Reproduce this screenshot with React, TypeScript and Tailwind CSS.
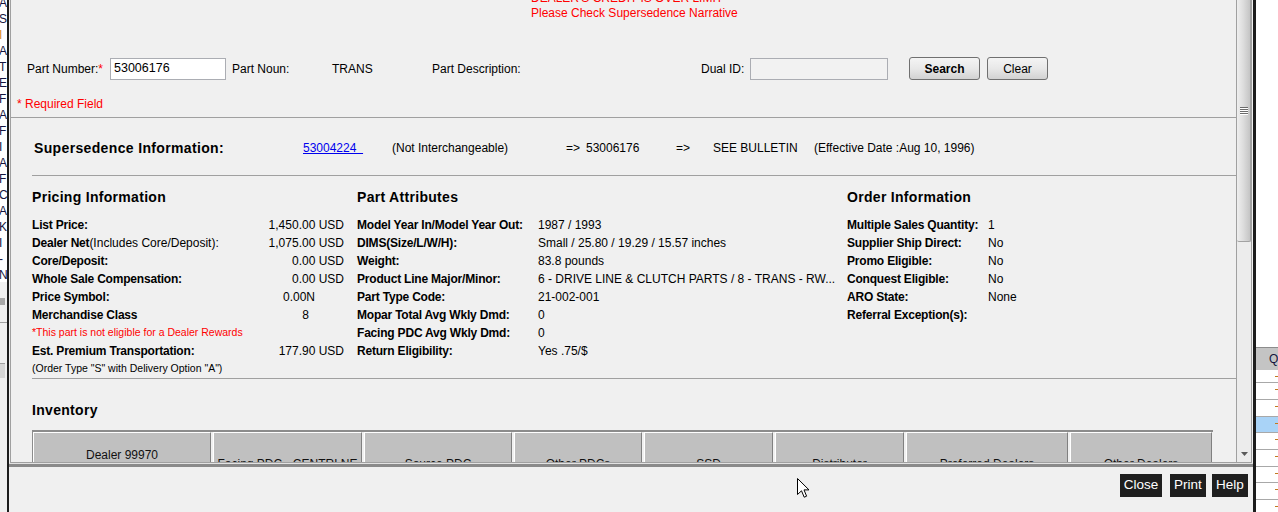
import React from "react";

const leftRows = ["AI", "S", "I", "A", "T", "E", "F", "A", "F", "I", "A", "F", "C", "A", "K", "I", "-", "N"];

const pricing = [
  { label: "List Price:", value: "1,450.00 USD", pr: "pr-0" },
  { label: "Dealer Net", extra: "(Includes Core/Deposit):", value: "1,075.00 USD", pr: "pr-0" },
  { label: "Core/Deposit:", value: "0.00 USD", pr: "pr-0" },
  { label: "Whole Sale Compensation:", value: "0.00 USD", pr: "pr-0" },
  { label: "Price Symbol:", value: "0.00N", pr: "pr-[29px]" },
  { label: "Merchandise Class", value: "8", pr: "pr-[35px]" },
];

const attributes = [
  ["Model Year In/Model Year Out:", "1987 / 1993"],
  ["DIMS(Size/L/W/H):", "Small / 25.80 / 19.29 / 15.57 inches"],
  ["Weight:", "83.8 pounds"],
  ["Product Line Major/Minor:", "6 - DRIVE LINE & CLUTCH PARTS / 8 - TRANS - RW..."],
  ["Part Type Code:", "21-002-001"],
  ["Mopar Total Avg Wkly Dmd:", "0"],
  ["Facing PDC Avg Wkly Dmd:", "0"],
  ["Return Eligibility:", "Yes .75/$"],
];

const orderInfo = [
  ["Multiple Sales Quantity:", "1"],
  ["Supplier Ship Direct:", "No"],
  ["Promo Eligible:", "No"],
  ["Conquest Eligible:", "No"],
  ["ARO State:", "None"],
  ["Referral Exception(s):", ""],
];

const inventoryCols = [
  { name: "Dealer 99970", w: "w-[178px]", two: true },
  { name: "Facing PDC - CENTRLNE", w: "w-[149px]" },
  { name: "Source PDC", w: "w-[148px]" },
  { name: "Other PDCs", w: "w-[128px]" },
  { name: "SSD", w: "w-[129px]" },
  { name: "Distributor", w: "w-[129px]" },
  { name: "Preferred Dealers", w: "w-[162px]" },
  { name: "Other Dealers", w: "w-[142px]" },
];

const rightRows = [
  { h: "h-[13px]", blue: false },
  { h: "h-[17px]", blue: false },
  { h: "h-[17px]", blue: false },
  { h: "h-[16px]", blue: true },
  { h: "h-[17px]", blue: false },
  { h: "h-[17px]", blue: false },
  { h: "h-[16px]", blue: false },
  { h: "h-[17px]", blue: false },
  { h: "h-[17px]", blue: false },
];

function LeftStrip() {
  return (
    <div className="flex w-[7px] flex-none flex-col overflow-hidden">
      <div className="h-[282px] flex-none overflow-hidden bg-white">
        <div className="-mt-[5px]">
          {leftRows.map((t, i) => (
            <div
              key={i}
              className={`-ml-px h-[16px] whitespace-nowrap text-[12px] leading-[16px] ${i === 2 ? "text-[#d98a1a]" : "text-[#151540]"}`}
            >
              {t}
            </div>
          ))}
        </div>
      </div>
      <div className="h-[16px] flex-none" />
      <div className="h-[7px] w-[5px] flex-none bg-[#a9a9a9]" />
      <div className="h-[17px] flex-none" />
      <div className="h-px flex-none bg-[#a0a0a0]" />
      <div className="h-[40px] flex-none" />
      <div className="h-[15px] w-[5px] flex-none border-t border-[#a0a0a0] bg-[#d6d6d6]" />
    </div>
  );
}

function RightStrip() {
  return (
    <div className="flex w-[22px] flex-none flex-col overflow-hidden bg-white">
      <div className="h-[347px] flex-none" />
      <div className="h-px flex-none bg-[#8c8c8c]" />
      <div className="flex h-[22px] flex-none items-center bg-[#c4c4c4] pl-[13px] text-[12px] text-[#14143c]">Q</div>
      {rightRows.map((r, i) => (
        <div
          key={i}
          className={`relative flex-none border-b border-[#a8a8a8] ${r.h} ${r.blue ? "bg-[#a9d3f7]" : "bg-white"}`}
        >
          <div className="absolute top-[6px] right-0 h-px w-[3px] bg-[#c07a20]" />
        </div>
      ))}
    </div>
  );
}

function Scrollbar() {
  return (
    <div className="flex w-[15px] flex-none flex-col border-l border-[#a0a0a0] bg-[#ececec]">
      <div className="flex h-[242px] flex-none justify-center rounded-b-[2px] border-r border-b border-[#a2a2a2] bg-linear-to-r from-[#efefef] via-[#dcdcdc] to-[#c4c4c4] pt-[107px]">
        <svg width="8" height="9" viewBox="0 0 8 9">
          <g fill="#6b6b6b">
            <rect x="0" y="0" width="8" height="1" />
            <rect x="0" y="2" width="8" height="1" />
            <rect x="0" y="4" width="8" height="1" />
            <rect x="0" y="6" width="8" height="1" />
          </g>
          <g fill="#ffffff">
            <rect x="0" y="1" width="8" height="1" />
            <rect x="0" y="3" width="8" height="1" />
            <rect x="0" y="5" width="8" height="1" />
            <rect x="0" y="7" width="8" height="1" />
          </g>
        </svg>
      </div>
      <div className="flex-1" />
      <div className="flex h-[17px] flex-none items-center justify-center">
        <svg width="7" height="4" viewBox="0 0 7 4">
          <path d="M0 0 H7 L3.5 4 Z" fill="#5a5a5a" />
        </svg>
      </div>
    </div>
  );
}

function WinButton({ children, w, bold }: { children: React.ReactNode; w: string; bold?: boolean }) {
  return (
    <div
      className={`flex h-[23px] flex-none items-center justify-center rounded-[3px] border border-[#707070] bg-linear-to-b from-[#f4f4f4] via-[#e8e8e8] to-[#d2d2d2] text-[12px] text-black ${w} ${bold ? "font-bold" : ""}`}
    >
      {children}
    </div>
  );
}

function Content() {
  return (
    <div className="flex w-[1225px] flex-none flex-col overflow-hidden">
      <div className="-mt-[9px] pl-[520px] text-[12px] leading-[15px] text-[#ff0000]">
        <div>DEALER'S CREDIT IS OVER LIMIT</div>
        <div>Please Check Supersedence Narrative</div>
      </div>

      <div className="mt-[36px] flex h-[23px] flex-none items-center pl-[16px] text-[12px]">
        <div className="w-[83px] flex-none">
          Part Number:<span className="text-[#ff0000]">*</span>
        </div>
        <div className="flex h-[22px] w-[116px] flex-none items-center border border-[#abadb3] bg-white pl-[3px] text-[12.5px]">
          53006176
        </div>
        <div className="ml-[6px] w-[100px] flex-none">Part Noun:</div>
        <div className="w-[100px] flex-none">TRANS</div>
        <div className="w-[269px] flex-none">Part Description:</div>
        <div className="w-[49px] flex-none">Dual ID:</div>
        <div className="h-[22px] w-[138px] flex-none border border-[#abadb3] bg-[#f2f2f2]" />
        <div className="ml-[21px]">
          <WinButton w="w-[71px]" bold>
            Search
          </WinButton>
        </div>
        <div className="ml-[7px]">
          <WinButton w="w-[61px]">Clear</WinButton>
        </div>
      </div>

      <div className="mt-[16px] h-[16px] flex-none pl-[6px] text-[12px] leading-[16px] text-[#ff0000]">* Required Field</div>

      <div className="mt-[5px] h-px flex-none bg-[#a0a0a0]" />

      <div className="mt-[21px] flex h-[18px] flex-none items-center pl-[23px] text-[12px] whitespace-nowrap">
        <div className="w-[269px] flex-none text-[14px] font-bold tracking-[0.35px]">Supersedence Information:</div>
        <div className="w-[89px] flex-none">
          <span className="text-[#0000ee] underline">53004224&nbsp;&nbsp;</span>
        </div>
        <div className="w-[174px] flex-none">(Not Interchangeable)</div>
        <div className="w-[20px] flex-none">=&gt;</div>
        <div className="w-[90px] flex-none">53006176</div>
        <div className="w-[37px] flex-none">=&gt;</div>
        <div className="w-[101px] flex-none">SEE BULLETIN</div>
        <div>(Effective Date :Aug 10, 1996)</div>
      </div>

      <div className="mt-[18px] ml-[21px] h-px flex-none bg-[#a0a0a0]" />

      <div className="mt-[12px] ml-[21px] flex flex-none items-start text-[12px] whitespace-nowrap">
        <div className="flex w-[312px] flex-none flex-col">
          <div className="h-[18px] text-[14px] leading-[18px] font-bold tracking-[0.3px]">Pricing Information</div>
          <div className="mt-[10px] flex flex-col">
            {pricing.map((p) => (
              <div key={p.label} className="flex h-[18px] items-center justify-between">
                <div className="font-bold tracking-[-0.2px]">
                  {p.label}
                  {p.extra && <span className="font-normal tracking-normal">{p.extra}</span>}
                </div>
                <div className={p.pr}>{p.value}</div>
              </div>
            ))}
            <div className="flex h-[18px] items-center text-[10.5px] text-[#ff0000]">
              *This part is not eligible for a Dealer Rewards
            </div>
            <div className="flex h-[18px] items-center justify-between">
              <div className="font-bold tracking-[-0.2px]">Est. Premium Transportation:</div>
              <div>177.90 USD</div>
            </div>
            <div className="flex h-[18px] items-center text-[10.5px]">(Order Type "S" with Delivery Option "A")</div>
          </div>
        </div>

        <div className="ml-[13px] flex w-[490px] flex-none flex-col">
          <div className="h-[18px] text-[14px] leading-[18px] font-bold tracking-[0.3px]">Part Attributes</div>
          <div className="mt-[10px] flex flex-col">
            {attributes.map(([l, v]) => (
              <div key={l} className="flex h-[18px] items-center">
                <div className="w-[181px] flex-none font-bold tracking-[-0.2px]">{l}</div>
                <div>{v}</div>
              </div>
            ))}
          </div>
        </div>

        <div className="flex flex-1 flex-col">
          <div className="h-[18px] text-[14px] leading-[18px] font-bold tracking-[0.3px]">Order Information</div>
          <div className="mt-[10px] flex flex-col">
            {orderInfo.map(([l, v]) => (
              <div key={l} className="flex h-[18px] items-center">
                <div className="w-[141px] flex-none font-bold tracking-[-0.2px]">{l}</div>
                <div>{v}</div>
              </div>
            ))}
          </div>
        </div>
      </div>

      <div className="ml-[21px] h-px flex-none bg-[#a0a0a0]" />

      <div className="mt-[22px] ml-[21px] h-[18px] flex-none text-[14px] leading-[18px] font-bold tracking-[0.3px]">
        Inventory
      </div>

      <div className="mt-[11px] ml-[21px] flex w-[1181px] flex-none gap-[2px] border-t-2 border-l border-[#8c8c8c]">
        {inventoryCols.map((c) => (
          <div
            key={c.name}
            className={`flex h-[64px] flex-none flex-col items-center justify-center border border-t-white border-l-white border-r-[#808080] border-b-[#808080] bg-[#c0c0c0] text-[12px] leading-[18px] text-[#111] ${c.w}`}
          >
            <div>{c.name}</div>
            {c.two && <div className="h-[18px]" />}
          </div>
        ))}
      </div>
    </div>
  );
}

function Cursor() {
  return (
    <svg className="absolute top-[478px] left-[797px]" width="13" height="21" viewBox="0 0 13 21">
      <path
        d="M0.5 0.5 V16.5 L4.5 12.8 L7.2 19.2 L9.6 18.2 L7 11.9 H12 Z"
        fill="#ffffff"
        stroke="#000000"
        strokeWidth="1"
        strokeLinejoin="miter"
      />
    </svg>
  );
}

export default function App() {
  return (
    <div className="relative flex h-[512px] w-[1278px] overflow-hidden bg-[#f0f0f0] font-['Liberation_Sans',Arial,sans-serif] text-black">
      <LeftStrip />
      <div className="w-[2px] flex-none bg-[#1c1c1c]" />

      <div className="flex w-[1244px] flex-none flex-col">
        <div className="mx-px flex h-[463px] flex-none border-r border-b border-l border-[#a0a0a0]">
          <Content />
          <Scrollbar />
        </div>
        <div className="h-px flex-none bg-[#e2e2e2]" />
        <div className="h-[3px] flex-none bg-[#8a8a8a]" />
        <div className="flex flex-1 items-start justify-end pt-[7px] pr-[5px] text-[13.5px] text-white">
          <div className="flex h-[23px] w-[42px] items-center justify-center bg-[#1f1f1f]">Close</div>
          <div className="ml-[8px] flex h-[23px] w-[36px] items-center justify-center bg-[#1f1f1f]">Print</div>
          <div className="ml-[6px] flex h-[23px] w-[36px] items-center justify-center bg-[#1f1f1f]">Help</div>
        </div>
      </div>

      <div className="w-[3px] flex-none bg-[#1c1c1c]" />
      <RightStrip />
      <Cursor />
    </div>
  );
}
